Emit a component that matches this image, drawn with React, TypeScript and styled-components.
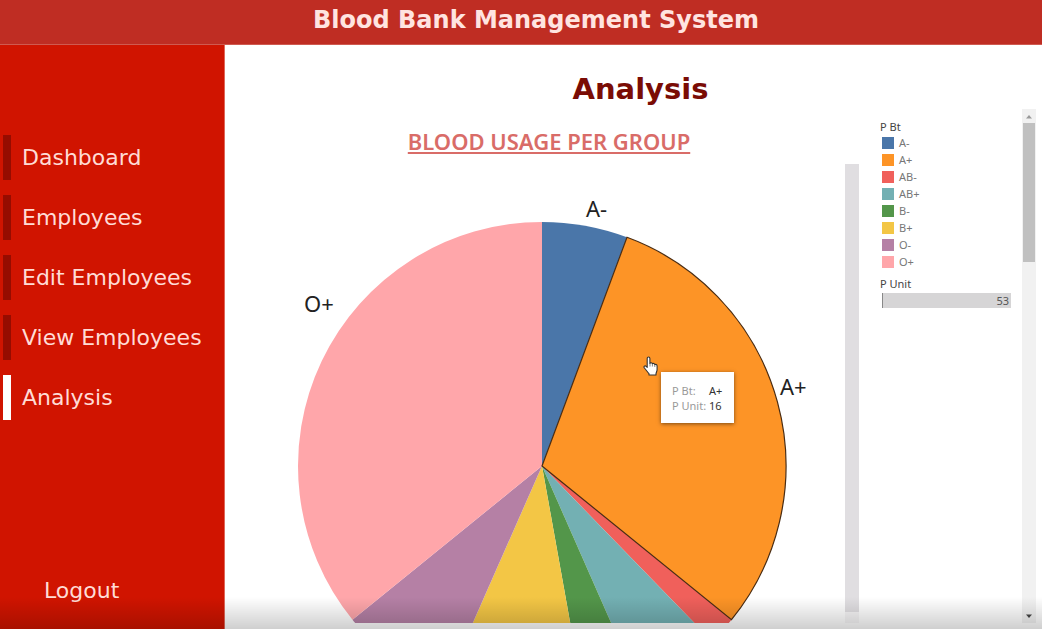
import React from "react";
import styled, { createGlobalStyle } from "styled-components";

const display = `"DejaVu Sans", Verdana, sans-serif`;
const report = `"Noto Sans", "Open Sans", sans-serif`;

const GlobalStyle = createGlobalStyle`
  *, *::before, *::after { box-sizing: border-box; }
  body { margin: 0; background: #fff; font-family: ${display}; }
`;

const Page = styled.div`
  position: relative;
  display: flex;
  flex-direction: column;
  height: 100vh;
  overflow: hidden;
`;

const Header = styled.header`
  display: flex;
  align-items: center;
  justify-content: center;
  flex: none;
  height: 45px;
  padding: 0 0 4px 30px;
  background: #bf2d23;
  border-bottom: 1px solid #cf5a50;
  color: #ffe4e0;
  font-size: 24px;
  font-weight: 700;
  line-height: 32px;
`;

const Body = styled.div`
  display: flex;
  flex: 1;
  min-height: 0;
`;

const Sidebar = styled.nav`
  display: flex;
  flex-direction: column;
  justify-content: space-between;
  flex: none;
  width: 225px;
  padding: 90px 0 22px 3px;
  background: #d01400;
  border-right: 1px solid #e0685a;
`;

const Menu = styled.ul`
  display: flex;
  flex-direction: column;
  gap: 15px;
  margin: 0;
  padding: 0;
  list-style: none;
`;

const MenuLink = styled.a<{ $active?: boolean }>`
  display: flex;
  align-items: center;
  height: 45px;
  padding-left: 11px;
  border-left: 8px solid ${(p) => (p.$active ? "#fff" : "#960c00")};
  color: #ffdcd6;
  font-size: 22px;
  text-decoration: none;
  white-space: nowrap;
`;

const LogoutButton = styled.button`
  align-self: flex-start;
  margin-left: 41px;
  padding: 0;
  border: 0;
  background: none;
  color: #ffdcd6;
  font-family: inherit;
  font-size: 22px;
  line-height: 32px;
`;

const Main = styled.main`
  display: flex;
  flex: 1;
  flex-direction: column;
  min-width: 0;
  padding: 24px 6px 6px 14px;
`;

const Title = styled.h1`
  margin: 0;
  padding-left: 6px;
  color: #7a0c05;
  font-size: 29px;
  font-weight: 700;
  line-height: 40px;
  text-align: center;
`;

const Frame = styled.section`
  display: flex;
  flex: 1;
  min-height: 0;
`;

const ChartColumn = styled.div`
  display: flex;
  flex: 1;
  flex-direction: column;
  min-width: 0;
`;

const ChartTitle = styled.h2`
  margin: 0;
  padding: 16px 0 7px;
  color: #d96c68;
  font-family: ${report};
  font-size: 22px;
  font-weight: 600;
  line-height: 32px;
  text-align: center;
  text-decoration: underline;
  text-decoration-thickness: 2px;
  text-underline-offset: 2px;
`;

const ChartRow = styled.div`
  display: flex;
  flex: 1;
  min-height: 0;
`;

const PlotArea = styled.div`
  display: flex;
  flex: 1;
  justify-content: center;
  overflow: hidden;
`;

const Plot = styled.div`
  position: relative;
  flex: none;
  width: 606px;
`;

const PieSvg = styled.svg`
  display: block;
  font-family: ${report};
  font-size: 22px;
`;

const Tooltip = styled.div`
  position: absolute;
  left: 422px;
  top: 208px;
  width: 73px;
  padding: 11px 0 10px 11px;
  background: #fff;
  box-shadow: 0 1px 4px rgba(0, 0, 0, 0.5);
`;

const TipList = styled.dl`
  display: grid;
  grid-template-columns: 37px auto;
  margin: 0;
  color: #999;
  font-family: ${report};
  font-size: 11px;
  line-height: 15px;
  white-space: nowrap;
`;

const TipValue = styled.dd`
  margin: 0;
  color: #333;
`;

const Pointer = styled.svg`
  position: absolute;
  left: 404px;
  top: 192px;
`;

const ChartTrack = styled.div`
  flex: none;
  width: 14px;
  padding-bottom: 11px;
  background: #f6f5f6;
`;

const ChartThumb = styled.div`
  height: 100%;
  background: #e0dee1;
`;

const Legend = styled.aside`
  flex: none;
  width: 163px;
  padding: 10px 11px 0 21px;
  color: #777;
  font-family: ${report};
  font-size: 11px;
`;

const LegendTitle = styled.h3`
  margin: 0;
  color: #444;
  font-size: 11px;
  font-weight: 400;
  line-height: 15px;
`;

const LegendList = styled.ul`
  margin: 0 0 6px;
  padding: 0 0 0 2px;
  list-style: none;
`;

const LegendItem = styled.li`
  display: flex;
  align-items: center;
  gap: 5px;
  height: 17px;
`;

const Swatch = styled.span<{ $color: string }>`
  width: 12px;
  height: 12px;
  background: ${(p) => p.$color};
`;

const UnitBar = styled.div`
  margin: 2px 0 0 2px;
  padding-right: 2px;
  border-left: 1px solid #888;
  background: #d6d5d6;
  color: #555;
  line-height: 15px;
  text-align: right;
`;

const Scrollbar = styled.div`
  display: flex;
  flex: none;
  flex-direction: column;
  align-items: center;
  width: 14px;
  background: #f1f1f1;
`;

const Arrow = styled.svg`
  flex: none;
  width: 14px;
  height: 14px;
`;

const Thumb = styled.div`
  width: 12px;
  height: 27%;
  margin-bottom: auto;
  background: #c0c0c0;
`;

const BottomShade = styled.div`
  position: absolute;
  right: 0;
  bottom: 0;
  left: 0;
  height: 32px;
  background: linear-gradient(rgba(0, 0, 0, 0), rgba(0, 0, 0, 0.19));
  pointer-events: none;
`;

const groups = [
  { name: "A-", units: 3, color: "#4a76a9" },
  { name: "A+", units: 16, color: "#fd9426" },
  { name: "AB-", units: 1, color: "#f0605b" },
  { name: "AB+", units: 3, color: "#73b0b3" },
  { name: "B-", units: 2, color: "#53964a" },
  { name: "B+", units: 5, color: "#f3c645" },
  { name: "O-", units: 4, color: "#b580a5" },
  { name: "O+", units: 19, color: "#ffa6aa" },
];
const total = groups.reduce((sum, g) => sum + g.units, 0);

const CENTER = 303;
const RADIUS = 244;

const pointAt = (units: number) => {
  const angle = (units / total) * 2 * Math.PI;
  return `${(CENTER + RADIUS * Math.sin(angle)).toFixed(1)} ${(CENTER - RADIUS * Math.cos(angle)).toFixed(1)}`;
};

const slices = groups.map((g, i) => {
  const start = groups.slice(0, i).reduce((sum, p) => sum + p.units, 0);
  return {
    ...g,
    path: `M${CENTER} ${CENTER}L${pointAt(start)}A${RADIUS} ${RADIUS} 0 0 1 ${pointAt(start + g.units)}Z`,
  };
});
const hovered = slices[1];

const menu = ["Dashboard", "Employees", "Edit Employees", "View Employees", "Analysis"];

export default function App() {
  return (
    <Page>
      <GlobalStyle />
      <Header>Blood Bank Management System</Header>
      <Body>
        <Sidebar>
          <Menu>
            {menu.map((item) => (
              <li key={item}>
                <MenuLink href="#" $active={item === "Analysis"}>{item}</MenuLink>
              </li>
            ))}
          </Menu>
          <LogoutButton type="button">Logout</LogoutButton>
        </Sidebar>
        <Main>
          <Title>Analysis</Title>
          <Frame>
            <ChartColumn>
              <ChartTitle>BLOOD USAGE PER GROUP</ChartTitle>
              <ChartRow>
                <PlotArea>
                  <Plot>
                    <PieSvg width="606" height="606" viewBox="0 1 606 606" role="img" aria-label="Blood usage per group">
                      {slices.map((s) => (
                        <path key={s.name} d={s.path} fill={s.color} />
                      ))}
                      <path d={hovered.path} fill="none" stroke="#4a2c12" strokeWidth="1.2" />
                      <g fill="#222">
                        <text x="347" y="54">A-</text>
                        <text x="541" y="232">A+</text>
                        <text x="65" y="149">O+</text>
                      </g>
                    </PieSvg>
                    <Tooltip role="tooltip">
                      <TipList>
                        <dt>P Bt:</dt>
                        <TipValue>{hovered.name}</TipValue>
                        <dt>P Unit:</dt>
                        <TipValue>{hovered.units}</TipValue>
                      </TipList>
                    </Tooltip>
                    <Pointer width="16" height="21" viewBox="0 0 16 21" aria-hidden="true">
                      <path
                        d="M4.2 2.4c0-1.9 2.7-1.9 2.7 0v5c.6-1 2.3-.7 2.5.4.7-.7 2.2-.4 2.4.8.9-.6 2.3 0 2.3 1.4v3.5c0 1.800-.9 2.700-1.100 4.200v1.300H6v-1.300C5 16.400 3.400 14.500 1.400 12c-1.100-1.500.5-2.800 1.800-1.700l1 1z"
                        fill="#fff"
                        stroke="#333"
                        strokeWidth="1.1"
                        strokeLinejoin="round"
                      />
                      <path d="M7 7.500v3M9.400 8v2.500M11.800 9v2" stroke="#666" strokeWidth=".8" />
                    </Pointer>
                  </Plot>
                </PlotArea>
                <ChartTrack>
                  <ChartThumb />
                </ChartTrack>
              </ChartRow>
            </ChartColumn>
            <Legend>
              <LegendTitle>P Bt</LegendTitle>
              <LegendList>
                {groups.map((g) => (
                  <LegendItem key={g.name}>
                    <Swatch $color={g.color} />
                    {g.name}
                  </LegendItem>
                ))}
              </LegendList>
              <LegendTitle>P Unit</LegendTitle>
              <UnitBar>{total}</UnitBar>
            </Legend>
            <Scrollbar>
              <Arrow viewBox="0 0 14 14" aria-hidden="true">
                <path d="M4 9.500 7 6l3 3.500z" fill="#999" />
              </Arrow>
              <Thumb />
              <Arrow viewBox="0 0 14 14" aria-hidden="true">
                <path d="M4 5.500h6L7 9z" fill="#444" />
              </Arrow>
            </Scrollbar>
          </Frame>
        </Main>
      </Body>
      <BottomShade />
    </Page>
  );
}
